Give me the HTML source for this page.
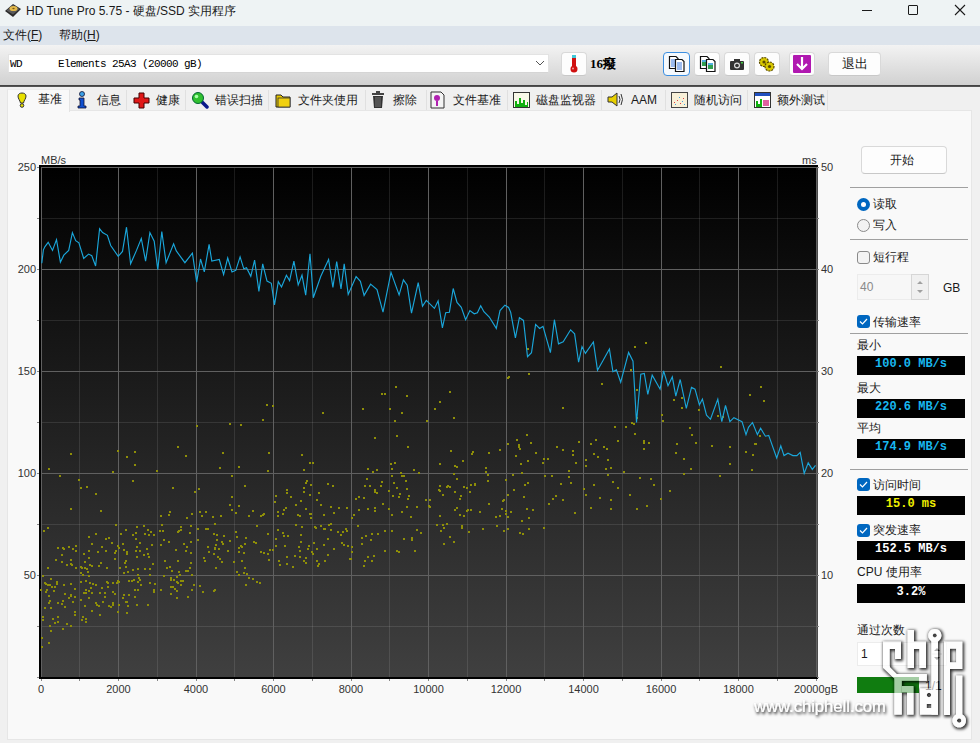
<!DOCTYPE html>
<html><head><meta charset="utf-8">
<style>
*{box-sizing:border-box}
html,body{margin:0;padding:0}
body{width:980px;height:743px;overflow:hidden;position:relative;background:#f0f0f0;font-family:"Liberation Sans",sans-serif;color:#1a1a1a}
.a{position:absolute}
.t{position:absolute;white-space:pre;font-size:12px;line-height:14px}
.btn{position:absolute;background:#fdfdfd;border:1px solid #d9d9d9;border-bottom-color:#c8c8c8;border-radius:4px}
.lcd{position:absolute;left:857px;width:108px;height:19px;background:#000;font-family:"Liberation Mono",monospace;font-weight:bold;font-size:12px;line-height:17px;text-align:center;white-space:pre}
.sep{position:absolute;left:850px;width:118px;height:1px;background:#a0a0a0}
.cb{position:absolute;left:857px;width:13px;height:13px;border-radius:3px;background:#0067c0}
.tab{position:absolute;top:90px;height:20px;background:#f0f0f0;border-right:1px solid #e0e0e0}
</style></head><body>
<!-- title bar -->
<div class="a" style="left:0;top:0;width:980px;height:26px;background:#eef3f4"></div>
<svg class="a" style="left:4px;top:2px" width="18" height="17" viewBox="0 0 18 17">
<path d="M1 9 L9 2 L17 7 L9 15 Z" fill="#2a2a2a"/>
<path d="M2.5 8.5 L9 3 L15.5 7 L9 12.5 Z" fill="#5a5a5a"/>
<ellipse cx="9.5" cy="6.5" rx="4" ry="2.6" fill="#e3b94a"/>
<ellipse cx="9.5" cy="6.5" rx="1.2" ry="0.8" fill="#7a5a10"/>
</svg>
<div class="t" style="left:26px;top:4px;font-size:12px;color:#1a1a1a">HD Tune Pro 5.75 - 硬盘/SSD 实用程序</div>
<div class="a" style="left:862px;top:10px;width:10px;height:1px;background:#1a1a1a"></div>
<div class="a" style="left:908px;top:5px;width:10px;height:10px;border:1px solid #1a1a1a;border-radius:1px"></div>
<svg class="a" style="left:954px;top:4px" width="12" height="12" viewBox="0 0 12 12"><path d="M1 1 L11 11 M11 1 L1 11" stroke="#1a1a1a" stroke-width="1.1"/></svg>
<!-- menu -->
<div class="a" style="left:0;top:26px;width:980px;height:19px;background:#dde4ec"></div>
<div class="t" style="left:3px;top:28px">文件(<u>F</u>)</div>
<div class="t" style="left:59px;top:28px">帮助(<u>H</u>)</div>
<!-- toolbar -->
<div class="a" style="left:0;top:45px;width:980px;height:40px;background:linear-gradient(#f3f3f3,#d1d1d1)"></div>
<div class="a" style="left:0;top:85px;width:980px;height:2px;background:linear-gradient(#3c3c3c,#5a5a5a)"></div>
<div class="a" style="left:8px;top:54px;width:541px;height:19px;background:#fff;border:1px solid #e3e3e3;border-bottom-color:#d5d5d5"></div>
<div class="t" style="left:10px;top:58px;font-family:'Liberation Mono',monospace;font-size:11px;letter-spacing:-0.6px;line-height:13px;color:#000">WD      Elements 25A3 (20000 gB)</div>
<svg class="a" style="left:535px;top:60px" width="10" height="7"><path d="M1 1 L5 5 L9 1" fill="none" stroke="#555" stroke-width="1"/></svg>
<!-- thermometer -->
<div class="btn" style="left:561px;top:52px;width:26px;height:24px"></div>
<svg class="a" style="left:566px;top:54px" width="16" height="20" viewBox="0 0 16 20">
<rect x="6" y="1" width="4" height="13" rx="2" fill="#d01010"/>
<rect x="6" y="1" width="4" height="3" fill="#40c8d8"/>
<circle cx="8" cy="15" r="3.5" fill="#d01010"/>
<circle cx="7" cy="14.5" r="1" fill="#fff" fill-opacity=".6"/>
</svg>
<div class="t" style="left:590px;top:57px;font-family:'Liberation Serif',serif;font-weight:bold;font-size:13px;color:#000">16癈</div>
<!-- toolbar buttons -->
<div class="btn" style="left:663px;top:52px;width:27px;height:24px;border:1px solid #3b8ee0;background:#f5f9fd"></div>
<div class="btn" style="left:694px;top:52px;width:26px;height:24px"></div>
<div class="btn" style="left:724px;top:52px;width:26px;height:24px"></div>
<div class="btn" style="left:754px;top:52px;width:26px;height:24px"></div>
<div class="btn" style="left:789px;top:52px;width:26px;height:24px"></div>
<div class="btn" style="left:828px;top:52px;width:53px;height:24px"></div>
<svg class="a" style="left:667px;top:55px" width="20" height="18" viewBox="0 0 20 18">
<path d="M2.5 1.5 H9 L11 3.5 V13.5 H2.5Z" fill="#fff" stroke="#111" stroke-width="1.2"/>
<path d="M4 5h5M4 7h5M4 9h5M4 11h5" stroke="#3a78e0" stroke-width="1"/>
<path d="M8.5 4.5 H15 L17 6.5 V16.5 H8.5Z" fill="#fff" stroke="#111" stroke-width="1.2"/>
<path d="M10 8h5M10 10h5M10 12h5M10 14h5" stroke="#3a78e0" stroke-width="1"/>
</svg>
<svg class="a" style="left:698px;top:55px" width="20" height="18" viewBox="0 0 20 18">
<path d="M2.5 1.5 H9 L11 3.5 V13.5 H2.5Z" fill="#fff" stroke="#111" stroke-width="1.2"/>
<rect x="4" y="5" width="5" height="6" fill="#30a050"/><rect x="4" y="5" width="5" height="2" fill="#50b0e0"/>
<path d="M8.5 4.5 H15 L17 6.5 V16.5 H8.5Z" fill="#fff" stroke="#111" stroke-width="1.2"/>
<rect x="10" y="8" width="5" height="6" fill="#30a050"/><rect x="10" y="8" width="5" height="2" fill="#50b0e0"/>
</svg>
<svg class="a" style="left:728px;top:56px" width="18" height="16" viewBox="0 0 18 16">
<rect x="2" y="5" width="14" height="9" rx="1" fill="#333"/>
<rect x="6" y="3" width="6" height="3" fill="#333"/>
<circle cx="9" cy="9.5" r="3" fill="#ddd"/>
<circle cx="9" cy="9.5" r="1.8" fill="#333"/>
<rect x="13" y="6" width="2" height="1.5" fill="#4c4"/>
</svg>
<svg class="a" style="left:757px;top:55px" width="20" height="18" viewBox="0 0 20 18">
<circle cx="7" cy="7" r="4.5" fill="#d8c800" stroke="#5a4a00" stroke-width="1.2" stroke-dasharray="2 1"/>
<circle cx="12.5" cy="11.5" r="4.5" fill="#d8c800" stroke="#5a4a00" stroke-width="1.2" stroke-dasharray="2 1"/>
<circle cx="7" cy="7" r="1.6" fill="#5a4a00"/><circle cx="12.5" cy="11.5" r="1.6" fill="#5a4a00"/>
</svg>
<svg class="a" style="left:792px;top:54px" width="20" height="20" viewBox="0 0 20 20">
<rect x="1" y="1" width="18" height="18" rx="1" fill="#b018b0"/>
<path d="M10 3 V15 M5 10 L10 15 L15 10" fill="none" stroke="#fff" stroke-width="2.2"/>
</svg>
<div class="t" style="left:842px;top:57px;font-size:13px">退出</div>
<!-- tab panel -->
<div class="a" style="left:7px;top:110px;width:965px;height:630px;background:#f9f9f9;border:1px solid #e6e6e6"></div>
<div class="tab" style="left:70px;width:57px"></div>
<div class="tab" style="left:127px;width:59px"></div>
<div class="tab" style="left:186px;width:83px"></div>
<div class="tab" style="left:269px;width:97px"></div>
<div class="tab" style="left:366px;width:61px"></div>
<div class="tab" style="left:427px;width:81px"></div>
<div class="tab" style="left:508px;width:94px"></div>
<div class="tab" style="left:602px;width:64px"></div>
<div class="tab" style="left:666px;width:82px"></div>
<div class="tab" style="left:748px;width:80px"></div>
<div class="a" style="left:7px;top:89px;width:63px;height:23px;background:#f9f9f9;border-left:1px solid #e6e6e6;border-top:1px solid #ececec;border-right:1px solid #e3e3e3"></div>
<!-- tab icons + labels -->
<svg class="a" style="left:15px;top:91px" width="14" height="17" viewBox="0 0 14 17"><path d="M3 5 C3 1 11 1 11 5 C11 8 9 9 8.5 12 L5.5 12 C5 9 3 8 3 5Z" fill="#e8e000" stroke="#333" stroke-width="1"/><circle cx="7" cy="14.5" r="1.8" fill="#e8e000" stroke="#333" stroke-width="1"/></svg>
<div class="t" style="left:38px;top:92px">基准</div>
<svg class="a" style="left:76px;top:91px" width="12" height="18" viewBox="0 0 12 18"><circle cx="6" cy="3" r="2.5" fill="#3aa0e8" stroke="#113" stroke-width=".8"/><path d="M3 7 H8 V15 H10 V17 H2 V15 H4 V9 H3Z" fill="#1050d0" stroke="#113" stroke-width=".8"/></svg>
<div class="t" style="left:97px;top:93px">信息</div>
<svg class="a" style="left:133px;top:92px" width="17" height="17" viewBox="0 0 17 17"><path d="M6 1 H11 V6 H16 V11 H11 V16 H6 V11 H1 V6 H6Z" fill="#e01818" stroke="#400" stroke-width="1"/></svg>
<div class="t" style="left:156px;top:93px">健康</div>
<svg class="a" style="left:191px;top:91px" width="18" height="18" viewBox="0 0 18 18"><path d="M10 10 L16 16" stroke="#0a1a8a" stroke-width="3.5" stroke-linecap="round"/><circle cx="7" cy="7" r="5.5" fill="#30c030" stroke="#063" stroke-width="1"/><circle cx="5.5" cy="5.5" r="1.8" fill="#afa"/></svg>
<div class="t" style="left:215px;top:93px">错误扫描</div>
<svg class="a" style="left:275px;top:92px" width="17" height="16" viewBox="0 0 17 16"><path d="M1 3 H6 L8 5 H15 V15 H1Z" fill="#e8c800" stroke="#222" stroke-width="1"/><rect x="3" y="6" width="12" height="9" fill="#f0d010" stroke="#333" stroke-width=".8"/></svg>
<div class="t" style="left:298px;top:93px">文件夹使用</div>
<svg class="a" style="left:371px;top:91px" width="14" height="18" viewBox="0 0 14 18"><rect x="1" y="2" width="12" height="2" fill="#444"/><rect x="5" y="0" width="4" height="2" fill="#444"/><path d="M2 5 H12 L11 17 H3Z" fill="#333"/><path d="M5 6 V16 M7 6 V16 M9 6 V16" stroke="#888" stroke-width=".8"/></svg>
<div class="t" style="left:393px;top:93px">擦除</div>
<svg class="a" style="left:430px;top:91px" width="15" height="18" viewBox="0 0 15 18"><path d="M1 1 H11 L14 4 V17 H1Z" fill="#f4f4f4" stroke="#333" stroke-width="1"/><circle cx="7" cy="7" r="3" fill="#b020b0"/><rect x="6" y="10" width="2" height="5" fill="#b020b0"/></svg>
<div class="t" style="left:453px;top:93px">文件基准</div>
<svg class="a" style="left:513px;top:92px" width="17" height="16" viewBox="0 0 17 16"><rect x=".5" y=".5" width="16" height="15" fill="#f8f8e8" stroke="#333"/><path d="M2 15 V9 H4 V12 H6 V6 H8 V11 H10 V8 H12 V13 H14 V10 H15 V15Z" fill="#10b010"/></svg>
<div class="t" style="left:536px;top:93px">磁盘监视器</div>
<svg class="a" style="left:607px;top:91px" width="18" height="17" viewBox="0 0 18 17"><path d="M1 6 H5 L10 2 V15 L5 11 H1Z" fill="#e8d000" stroke="#333" stroke-width="1"/><path d="M12 5 Q14 8.5 12 12 M14 3 Q17 8.5 14 14" fill="none" stroke="#333" stroke-width="1"/></svg>
<div class="t" style="left:631px;top:93px">AAM</div>
<svg class="a" style="left:671px;top:92px" width="17" height="16" viewBox="0 0 17 16"><rect x=".5" y=".5" width="16" height="15" fill="#f8f0d8" stroke="#444"/><g fill="#e04040"><rect x="3" y="10" width="1" height="1"/><rect x="6" y="8" width="1" height="1"/><rect x="9" y="11" width="1" height="1"/><rect x="12" y="6" width="1" height="1"/></g><g fill="#40a0e0"><rect x="4" y="12" width="1" height="1"/><rect x="8" y="5" width="1" height="1"/><rect x="11" y="9" width="1" height="1"/><rect x="13" y="12" width="1" height="1"/></g></svg>
<div class="t" style="left:694px;top:93px">随机访问</div>
<svg class="a" style="left:754px;top:92px" width="17" height="16" viewBox="0 0 17 16"><rect x=".5" y=".5" width="16" height="15" fill="#fff" stroke="#333"/><rect x="1" y="1" width="15" height="3" fill="#2050c0"/><path d="M2 15 V9 H4 V12 H6 V7 H8 V15Z" fill="#10b010"/><rect x="9" y="8" width="6" height="6" fill="#e060a0"/></svg>
<div class="t" style="left:777px;top:93px">额外测试</div>
<svg width="980" height="743" style="position:absolute;left:0;top:0">
<defs><linearGradient id="bg" x1="0" y1="0" x2="0" y2="1"><stop offset="0" stop-color="#000"/><stop offset="1" stop-color="#404040"/></linearGradient></defs>
<rect x="39" y="165" width="779" height="514" fill="url(#bg)"/>
<rect x="79" y="167" width="1" height="510" fill="#fff" fill-opacity="0.1"/>
<rect x="157" y="167" width="1" height="510" fill="#fff" fill-opacity="0.1"/>
<rect x="234" y="167" width="1" height="510" fill="#fff" fill-opacity="0.1"/>
<rect x="312" y="167" width="1" height="510" fill="#fff" fill-opacity="0.1"/>
<rect x="389" y="167" width="1" height="510" fill="#fff" fill-opacity="0.1"/>
<rect x="467" y="167" width="1" height="510" fill="#fff" fill-opacity="0.1"/>
<rect x="544" y="167" width="1" height="510" fill="#fff" fill-opacity="0.1"/>
<rect x="622" y="167" width="1" height="510" fill="#fff" fill-opacity="0.1"/>
<rect x="699" y="167" width="1" height="510" fill="#fff" fill-opacity="0.1"/>
<rect x="777" y="167" width="1" height="510" fill="#fff" fill-opacity="0.1"/>
<rect x="41" y="626" width="775" height="1" fill="#fff" fill-opacity="0.1"/>
<rect x="41" y="524" width="775" height="1" fill="#fff" fill-opacity="0.1"/>
<rect x="41" y="422" width="775" height="1" fill="#fff" fill-opacity="0.1"/>
<rect x="41" y="320" width="775" height="1" fill="#fff" fill-opacity="0.1"/>
<rect x="41" y="218" width="775" height="1" fill="#fff" fill-opacity="0.1"/>
<rect x="41" y="167" width="1" height="510" fill="#606060"/>
<rect x="118" y="167" width="1" height="510" fill="#606060"/>
<rect x="196" y="167" width="1" height="510" fill="#606060"/>
<rect x="273" y="167" width="1" height="510" fill="#606060"/>
<rect x="351" y="167" width="1" height="510" fill="#606060"/>
<rect x="428" y="167" width="1" height="510" fill="#606060"/>
<rect x="506" y="167" width="1" height="510" fill="#606060"/>
<rect x="583" y="167" width="1" height="510" fill="#606060"/>
<rect x="661" y="167" width="1" height="510" fill="#606060"/>
<rect x="738" y="167" width="1" height="510" fill="#606060"/>
<rect x="816" y="167" width="1" height="510" fill="#606060"/>
<rect x="41" y="677" width="775" height="1" fill="#606060"/>
<rect x="41" y="575" width="775" height="1" fill="#606060"/>
<rect x="41" y="473" width="775" height="1" fill="#606060"/>
<rect x="41" y="371" width="775" height="1" fill="#606060"/>
<rect x="41" y="269" width="775" height="1" fill="#606060"/>
<rect x="41" y="167" width="775" height="1" fill="#606060"/>
<rect x="39" y="165" width="779" height="2" fill="#000"/>
<rect x="39" y="165" width="2" height="514" fill="#000"/>
<rect x="39" y="677" width="779" height="2" fill="#000"/>
<rect x="817" y="167" width="1" height="510" fill="#4a4a4a"/>
<g fill="#8e8e08"><rect x="43" y="530" width="2" height="2"/><rect x="47" y="527" width="2" height="2"/><rect x="57" y="547" width="2" height="2"/><rect x="61" y="554" width="2" height="2"/><rect x="62" y="547" width="2" height="2"/><rect x="63" y="548" width="2" height="2"/><rect x="68" y="546" width="2" height="2"/><rect x="72" y="548" width="2" height="2"/><rect x="75" y="550" width="2" height="2"/><rect x="75" y="545" width="2" height="2"/><rect x="55" y="559" width="2" height="2"/><rect x="61" y="561" width="2" height="2"/><rect x="66" y="564" width="2" height="2"/><rect x="70" y="559" width="2" height="2"/><rect x="70" y="563" width="2" height="2"/><rect x="71" y="564" width="2" height="2"/><rect x="75" y="567" width="2" height="2"/><rect x="47" y="567" width="2" height="2"/><rect x="95" y="533" width="2" height="2"/><rect x="88" y="536" width="2" height="2"/><rect x="105" y="538" width="2" height="2"/><rect x="108" y="537" width="2" height="2"/><rect x="111" y="542" width="2" height="2"/><rect x="91" y="543" width="2" height="2"/><rect x="101" y="546" width="2" height="2"/><rect x="88" y="550" width="2" height="2"/><rect x="97" y="551" width="2" height="2"/><rect x="105" y="550" width="2" height="2"/><rect x="114" y="552" width="2" height="2"/><rect x="115" y="550" width="2" height="2"/><rect x="117" y="545" width="2" height="2"/><rect x="83" y="553" width="2" height="2"/><rect x="88" y="557" width="2" height="2"/><rect x="114" y="558" width="2" height="2"/><rect x="84" y="561" width="2" height="2"/><rect x="89" y="564" width="2" height="2"/><rect x="91" y="565" width="2" height="2"/><rect x="98" y="565" width="2" height="2"/><rect x="100" y="562" width="2" height="2"/><rect x="106" y="567" width="2" height="2"/><rect x="80" y="566" width="2" height="2"/><rect x="81" y="567" width="2" height="2"/><rect x="84" y="567" width="2" height="2"/><rect x="86" y="568" width="2" height="2"/><rect x="87" y="571" width="2" height="2"/><rect x="80" y="572" width="2" height="2"/><rect x="82" y="574" width="2" height="2"/><rect x="88" y="575" width="2" height="2"/><rect x="115" y="524" width="2" height="2"/><rect x="136" y="526" width="2" height="2"/><rect x="143" y="525" width="2" height="2"/><rect x="125" y="529" width="2" height="2"/><rect x="135" y="532" width="2" height="2"/><rect x="132" y="534" width="2" height="2"/><rect x="147" y="529" width="2" height="2"/><rect x="150" y="531" width="2" height="2"/><rect x="153" y="534" width="2" height="2"/><rect x="144" y="533" width="2" height="2"/><rect x="148" y="534" width="2" height="2"/><rect x="120" y="533" width="2" height="2"/><rect x="135" y="538" width="2" height="2"/><rect x="139" y="542" width="2" height="2"/><rect x="122" y="543" width="2" height="2"/><rect x="151" y="544" width="2" height="2"/><rect x="136" y="546" width="2" height="2"/><rect x="118" y="547" width="2" height="2"/><rect x="123" y="549" width="2" height="2"/><rect x="126" y="551" width="2" height="2"/><rect x="135" y="550" width="2" height="2"/><rect x="139" y="550" width="2" height="2"/><rect x="146" y="548" width="2" height="2"/><rect x="147" y="553" width="2" height="2"/><rect x="126" y="553" width="2" height="2"/><rect x="143" y="554" width="2" height="2"/><rect x="136" y="556" width="2" height="2"/><rect x="148" y="556" width="2" height="2"/><rect x="125" y="560" width="2" height="2"/><rect x="124" y="562" width="2" height="2"/><rect x="125" y="566" width="2" height="2"/><rect x="152" y="563" width="2" height="2"/><rect x="119" y="567" width="2" height="2"/><rect x="127" y="571" width="2" height="2"/><rect x="123" y="572" width="2" height="2"/><rect x="132" y="569" width="2" height="2"/><rect x="137" y="568" width="2" height="2"/><rect x="144" y="568" width="2" height="2"/><rect x="149" y="568" width="2" height="2"/><rect x="149" y="574" width="2" height="2"/><rect x="137" y="574" width="2" height="2"/><rect x="161" y="524" width="2" height="2"/><rect x="180" y="526" width="2" height="2"/><rect x="190" y="525" width="2" height="2"/><rect x="177" y="531" width="2" height="2"/><rect x="178" y="530" width="2" height="2"/><rect x="180" y="529" width="2" height="2"/><rect x="159" y="530" width="2" height="2"/><rect x="162" y="530" width="2" height="2"/><rect x="189" y="532" width="2" height="2"/><rect x="163" y="539" width="2" height="2"/><rect x="168" y="541" width="2" height="2"/><rect x="183" y="543" width="2" height="2"/><rect x="160" y="544" width="2" height="2"/><rect x="186" y="546" width="2" height="2"/><rect x="190" y="541" width="2" height="2"/><rect x="175" y="549" width="2" height="2"/><rect x="185" y="550" width="2" height="2"/><rect x="190" y="552" width="2" height="2"/><rect x="164" y="560" width="2" height="2"/><rect x="177" y="560" width="2" height="2"/><rect x="190" y="562" width="2" height="2"/><rect x="166" y="567" width="2" height="2"/><rect x="169" y="566" width="2" height="2"/><rect x="171" y="570" width="2" height="2"/><rect x="178" y="571" width="2" height="2"/><rect x="185" y="570" width="2" height="2"/><rect x="187" y="570" width="2" height="2"/><rect x="189" y="567" width="2" height="2"/><rect x="163" y="575" width="2" height="2"/><rect x="179" y="574" width="2" height="2"/><rect x="191" y="574" width="2" height="2"/><rect x="42" y="575" width="2" height="2"/><rect x="50" y="578" width="2" height="2"/><rect x="44" y="582" width="2" height="2"/><rect x="45" y="583" width="2" height="2"/><rect x="47" y="584" width="2" height="2"/><rect x="49" y="584" width="2" height="2"/><rect x="56" y="581" width="2" height="2"/><rect x="56" y="583" width="2" height="2"/><rect x="51" y="586" width="2" height="2"/><rect x="54" y="586" width="2" height="2"/><rect x="63" y="584" width="2" height="2"/><rect x="70" y="583" width="2" height="2"/><rect x="74" y="588" width="2" height="2"/><rect x="46" y="589" width="2" height="2"/><rect x="53" y="590" width="2" height="2"/><rect x="45" y="591" width="2" height="2"/><rect x="64" y="593" width="2" height="2"/><rect x="70" y="594" width="2" height="2"/><rect x="70" y="595" width="2" height="2"/><rect x="74" y="596" width="2" height="2"/><rect x="48" y="595" width="2" height="2"/><rect x="68" y="597" width="2" height="2"/><rect x="49" y="600" width="2" height="2"/><rect x="48" y="602" width="2" height="2"/><rect x="57" y="602" width="2" height="2"/><rect x="61" y="603" width="2" height="2"/><rect x="62" y="600" width="2" height="2"/><rect x="72" y="601" width="2" height="2"/><rect x="44" y="607" width="2" height="2"/><rect x="50" y="607" width="2" height="2"/><rect x="64" y="606" width="2" height="2"/><rect x="74" y="611" width="2" height="2"/><rect x="74" y="614" width="2" height="2"/><rect x="42" y="616" width="2" height="2"/><rect x="42" y="619" width="2" height="2"/><rect x="52" y="618" width="2" height="2"/><rect x="57" y="616" width="2" height="2"/><rect x="57" y="621" width="2" height="2"/><rect x="54" y="622" width="2" height="2"/><rect x="66" y="623" width="2" height="2"/><rect x="70" y="625" width="2" height="2"/><rect x="49" y="625" width="2" height="2"/><rect x="50" y="630" width="2" height="2"/><rect x="62" y="628" width="2" height="2"/><rect x="40" y="589" width="2" height="2"/><rect x="80" y="581" width="2" height="2"/><rect x="85" y="580" width="2" height="2"/><rect x="89" y="582" width="2" height="2"/><rect x="92" y="583" width="2" height="2"/><rect x="95" y="584" width="2" height="2"/><rect x="106" y="581" width="2" height="2"/><rect x="107" y="582" width="2" height="2"/><rect x="112" y="582" width="2" height="2"/><rect x="116" y="582" width="2" height="2"/><rect x="101" y="587" width="2" height="2"/><rect x="107" y="586" width="2" height="2"/><rect x="90" y="587" width="2" height="2"/><rect x="85" y="589" width="2" height="2"/><rect x="88" y="590" width="2" height="2"/><rect x="83" y="592" width="2" height="2"/><rect x="85" y="592" width="2" height="2"/><rect x="91" y="592" width="2" height="2"/><rect x="99" y="592" width="2" height="2"/><rect x="104" y="592" width="2" height="2"/><rect x="112" y="591" width="2" height="2"/><rect x="114" y="593" width="2" height="2"/><rect x="88" y="597" width="2" height="2"/><rect x="104" y="596" width="2" height="2"/><rect x="80" y="599" width="2" height="2"/><rect x="95" y="602" width="2" height="2"/><rect x="96" y="604" width="2" height="2"/><rect x="98" y="605" width="2" height="2"/><rect x="102" y="601" width="2" height="2"/><rect x="112" y="602" width="2" height="2"/><rect x="112" y="604" width="2" height="2"/><rect x="108" y="605" width="2" height="2"/><rect x="110" y="606" width="2" height="2"/><rect x="84" y="605" width="2" height="2"/><rect x="91" y="610" width="2" height="2"/><rect x="99" y="614" width="2" height="2"/><rect x="117" y="611" width="2" height="2"/><rect x="82" y="616" width="2" height="2"/><rect x="81" y="619" width="2" height="2"/><rect x="85" y="618" width="2" height="2"/><rect x="85" y="621" width="2" height="2"/><rect x="118" y="581" width="2" height="2"/><rect x="128" y="580" width="2" height="2"/><rect x="131" y="580" width="2" height="2"/><rect x="133" y="579" width="2" height="2"/><rect x="137" y="581" width="2" height="2"/><rect x="138" y="577" width="2" height="2"/><rect x="139" y="579" width="2" height="2"/><rect x="140" y="584" width="2" height="2"/><rect x="149" y="582" width="2" height="2"/><rect x="154" y="583" width="2" height="2"/><rect x="134" y="589" width="2" height="2"/><rect x="137" y="589" width="2" height="2"/><rect x="153" y="589" width="2" height="2"/><rect x="153" y="591" width="2" height="2"/><rect x="123" y="594" width="2" height="2"/><rect x="128" y="594" width="2" height="2"/><rect x="134" y="596" width="2" height="2"/><rect x="122" y="597" width="2" height="2"/><rect x="125" y="601" width="2" height="2"/><rect x="126" y="601" width="2" height="2"/><rect x="127" y="605" width="2" height="2"/><rect x="136" y="604" width="2" height="2"/><rect x="147" y="604" width="2" height="2"/><rect x="118" y="604" width="2" height="2"/><rect x="126" y="612" width="2" height="2"/><rect x="117" y="580" width="2" height="2"/><rect x="170" y="577" width="2" height="2"/><rect x="170" y="579" width="2" height="2"/><rect x="173" y="579" width="2" height="2"/><rect x="176" y="576" width="2" height="2"/><rect x="176" y="581" width="2" height="2"/><rect x="177" y="582" width="2" height="2"/><rect x="180" y="580" width="2" height="2"/><rect x="182" y="580" width="2" height="2"/><rect x="180" y="584" width="2" height="2"/><rect x="193" y="584" width="2" height="2"/><rect x="160" y="589" width="2" height="2"/><rect x="170" y="586" width="2" height="2"/><rect x="172" y="586" width="2" height="2"/><rect x="174" y="588" width="2" height="2"/><rect x="176" y="590" width="2" height="2"/><rect x="191" y="589" width="2" height="2"/><rect x="170" y="593" width="2" height="2"/><rect x="176" y="597" width="2" height="2"/><rect x="187" y="596" width="2" height="2"/><rect x="41" y="637" width="2" height="2"/><rect x="48" y="642" width="2" height="2"/><rect x="41" y="646" width="2" height="2"/><rect x="48" y="468" width="2" height="2"/><rect x="70" y="453" width="2" height="2"/><rect x="59" y="475" width="2" height="2"/><rect x="70" y="508" width="2" height="2"/><rect x="78" y="479" width="2" height="2"/><rect x="80" y="487" width="2" height="2"/><rect x="86" y="486" width="2" height="2"/><rect x="95" y="493" width="2" height="2"/><rect x="100" y="510" width="2" height="2"/><rect x="112" y="471" width="2" height="2"/><rect x="117" y="450" width="2" height="2"/><rect x="126" y="456" width="2" height="2"/><rect x="134" y="451" width="2" height="2"/><rect x="134" y="464" width="2" height="2"/><rect x="132" y="480" width="2" height="2"/><rect x="156" y="470" width="2" height="2"/><rect x="160" y="515" width="2" height="2"/><rect x="168" y="514" width="2" height="2"/><rect x="169" y="511" width="2" height="2"/><rect x="172" y="487" width="2" height="2"/><rect x="177" y="446" width="2" height="2"/><rect x="185" y="455" width="2" height="2"/><rect x="186" y="517" width="2" height="2"/><rect x="191" y="513" width="2" height="2"/><rect x="194" y="491" width="2" height="2"/><rect x="197" y="528" width="2" height="2"/><rect x="205" y="528" width="2" height="2"/><rect x="207" y="528" width="2" height="2"/><rect x="214" y="523" width="2" height="2"/><rect x="213" y="533" width="2" height="2"/><rect x="216" y="534" width="2" height="2"/><rect x="223" y="535" width="2" height="2"/><rect x="197" y="539" width="2" height="2"/><rect x="216" y="539" width="2" height="2"/><rect x="221" y="541" width="2" height="2"/><rect x="222" y="543" width="2" height="2"/><rect x="229" y="540" width="2" height="2"/><rect x="215" y="544" width="2" height="2"/><rect x="207" y="546" width="2" height="2"/><rect x="214" y="547" width="2" height="2"/><rect x="214" y="548" width="2" height="2"/><rect x="218" y="548" width="2" height="2"/><rect x="227" y="550" width="2" height="2"/><rect x="208" y="551" width="2" height="2"/><rect x="213" y="553" width="2" height="2"/><rect x="217" y="556" width="2" height="2"/><rect x="219" y="558" width="2" height="2"/><rect x="203" y="557" width="2" height="2"/><rect x="204" y="560" width="2" height="2"/><rect x="221" y="561" width="2" height="2"/><rect x="215" y="567" width="2" height="2"/><rect x="235" y="531" width="2" height="2"/><rect x="236" y="536" width="2" height="2"/><rect x="245" y="537" width="2" height="2"/><rect x="244" y="543" width="2" height="2"/><rect x="238" y="547" width="2" height="2"/><rect x="240" y="545" width="2" height="2"/><rect x="241" y="546" width="2" height="2"/><rect x="238" y="551" width="2" height="2"/><rect x="243" y="552" width="2" height="2"/><rect x="253" y="541" width="2" height="2"/><rect x="255" y="542" width="2" height="2"/><rect x="267" y="533" width="2" height="2"/><rect x="260" y="551" width="2" height="2"/><rect x="263" y="552" width="2" height="2"/><rect x="267" y="553" width="2" height="2"/><rect x="269" y="549" width="2" height="2"/><rect x="272" y="549" width="2" height="2"/><rect x="268" y="559" width="2" height="2"/><rect x="233" y="561" width="2" height="2"/><rect x="241" y="560" width="2" height="2"/><rect x="244" y="567" width="2" height="2"/><rect x="236" y="571" width="2" height="2"/><rect x="238" y="574" width="2" height="2"/><rect x="243" y="572" width="2" height="2"/><rect x="246" y="573" width="2" height="2"/><rect x="248" y="577" width="2" height="2"/><rect x="252" y="578" width="2" height="2"/><rect x="256" y="581" width="2" height="2"/><rect x="259" y="582" width="2" height="2"/><rect x="245" y="584" width="2" height="2"/><rect x="199" y="585" width="2" height="2"/><rect x="202" y="591" width="2" height="2"/><rect x="213" y="590" width="2" height="2"/><rect x="214" y="589" width="2" height="2"/><rect x="256" y="525" width="2" height="2"/><rect x="277" y="529" width="2" height="2"/><rect x="282" y="532" width="2" height="2"/><rect x="283" y="535" width="2" height="2"/><rect x="287" y="535" width="2" height="2"/><rect x="300" y="534" width="2" height="2"/><rect x="295" y="524" width="2" height="2"/><rect x="301" y="526" width="2" height="2"/><rect x="275" y="538" width="2" height="2"/><rect x="284" y="545" width="2" height="2"/><rect x="275" y="545" width="2" height="2"/><rect x="300" y="541" width="2" height="2"/><rect x="298" y="546" width="2" height="2"/><rect x="308" y="545" width="2" height="2"/><rect x="299" y="550" width="2" height="2"/><rect x="307" y="548" width="2" height="2"/><rect x="311" y="551" width="2" height="2"/><rect x="312" y="553" width="2" height="2"/><rect x="294" y="555" width="2" height="2"/><rect x="286" y="556" width="2" height="2"/><rect x="299" y="556" width="2" height="2"/><rect x="305" y="557" width="2" height="2"/><rect x="303" y="560" width="2" height="2"/><rect x="305" y="562" width="2" height="2"/><rect x="278" y="560" width="2" height="2"/><rect x="279" y="564" width="2" height="2"/><rect x="286" y="563" width="2" height="2"/><rect x="292" y="566" width="2" height="2"/><rect x="314" y="526" width="2" height="2"/><rect x="315" y="527" width="2" height="2"/><rect x="320" y="525" width="2" height="2"/><rect x="323" y="528" width="2" height="2"/><rect x="324" y="528" width="2" height="2"/><rect x="328" y="524" width="2" height="2"/><rect x="330" y="523" width="2" height="2"/><rect x="330" y="529" width="2" height="2"/><rect x="337" y="531" width="2" height="2"/><rect x="342" y="531" width="2" height="2"/><rect x="340" y="534" width="2" height="2"/><rect x="345" y="528" width="2" height="2"/><rect x="346" y="530" width="2" height="2"/><rect x="327" y="538" width="2" height="2"/><rect x="313" y="542" width="2" height="2"/><rect x="323" y="544" width="2" height="2"/><rect x="341" y="542" width="2" height="2"/><rect x="343" y="544" width="2" height="2"/><rect x="347" y="545" width="2" height="2"/><rect x="316" y="548" width="2" height="2"/><rect x="333" y="548" width="2" height="2"/><rect x="327" y="554" width="2" height="2"/><rect x="316" y="560" width="2" height="2"/><rect x="324" y="560" width="2" height="2"/><rect x="318" y="563" width="2" height="2"/><rect x="317" y="565" width="2" height="2"/><rect x="349" y="558" width="2" height="2"/><rect x="266" y="404" width="2" height="2"/><rect x="272" y="405" width="2" height="2"/><rect x="262" y="419" width="2" height="2"/><rect x="322" y="412" width="2" height="2"/><rect x="196" y="425" width="2" height="2"/><rect x="229" y="423" width="2" height="2"/><rect x="240" y="424" width="2" height="2"/><rect x="222" y="452" width="2" height="2"/><rect x="268" y="452" width="2" height="2"/><rect x="219" y="467" width="2" height="2"/><rect x="238" y="466" width="2" height="2"/><rect x="267" y="470" width="2" height="2"/><rect x="301" y="454" width="2" height="2"/><rect x="309" y="462" width="2" height="2"/><rect x="312" y="462" width="2" height="2"/><rect x="303" y="469" width="2" height="2"/><rect x="231" y="475" width="2" height="2"/><rect x="198" y="488" width="2" height="2"/><rect x="244" y="485" width="2" height="2"/><rect x="231" y="496" width="2" height="2"/><rect x="229" y="504" width="2" height="2"/><rect x="238" y="505" width="2" height="2"/><rect x="231" y="509" width="2" height="2"/><rect x="199" y="511" width="2" height="2"/><rect x="205" y="511" width="2" height="2"/><rect x="201" y="515" width="2" height="2"/><rect x="212" y="516" width="2" height="2"/><rect x="220" y="515" width="2" height="2"/><rect x="235" y="512" width="2" height="2"/><rect x="248" y="515" width="2" height="2"/><rect x="252" y="510" width="2" height="2"/><rect x="260" y="515" width="2" height="2"/><rect x="262" y="514" width="2" height="2"/><rect x="263" y="513" width="2" height="2"/><rect x="275" y="495" width="2" height="2"/><rect x="274" y="501" width="2" height="2"/><rect x="286" y="489" width="2" height="2"/><rect x="286" y="492" width="2" height="2"/><rect x="290" y="496" width="2" height="2"/><rect x="303" y="487" width="2" height="2"/><rect x="303" y="491" width="2" height="2"/><rect x="305" y="482" width="2" height="2"/><rect x="306" y="480" width="2" height="2"/><rect x="310" y="484" width="2" height="2"/><rect x="309" y="494" width="2" height="2"/><rect x="300" y="500" width="2" height="2"/><rect x="295" y="504" width="2" height="2"/><rect x="285" y="507" width="2" height="2"/><rect x="283" y="509" width="2" height="2"/><rect x="277" y="511" width="2" height="2"/><rect x="277" y="515" width="2" height="2"/><rect x="282" y="513" width="2" height="2"/><rect x="305" y="508" width="2" height="2"/><rect x="309" y="513" width="2" height="2"/><rect x="310" y="513" width="2" height="2"/><rect x="297" y="514" width="2" height="2"/><rect x="299" y="515" width="2" height="2"/><rect x="310" y="517" width="2" height="2"/><rect x="318" y="492" width="2" height="2"/><rect x="316" y="499" width="2" height="2"/><rect x="320" y="504" width="2" height="2"/><rect x="327" y="483" width="2" height="2"/><rect x="332" y="485" width="2" height="2"/><rect x="330" y="506" width="2" height="2"/><rect x="333" y="512" width="2" height="2"/><rect x="338" y="507" width="2" height="2"/><rect x="346" y="507" width="2" height="2"/><rect x="323" y="514" width="2" height="2"/><rect x="395" y="386" width="2" height="2"/><rect x="381" y="393" width="2" height="2"/><rect x="384" y="393" width="2" height="2"/><rect x="406" y="395" width="2" height="2"/><rect x="362" y="408" width="2" height="2"/><rect x="389" y="408" width="2" height="2"/><rect x="401" y="412" width="2" height="2"/><rect x="394" y="420" width="2" height="2"/><rect x="426" y="420" width="2" height="2"/><rect x="449" y="391" width="2" height="2"/><rect x="439" y="401" width="2" height="2"/><rect x="434" y="408" width="2" height="2"/><rect x="453" y="417" width="2" height="2"/><rect x="374" y="437" width="2" height="2"/><rect x="396" y="435" width="2" height="2"/><rect x="407" y="446" width="2" height="2"/><rect x="450" y="450" width="2" height="2"/><rect x="472" y="451" width="2" height="2"/><rect x="471" y="453" width="2" height="2"/><rect x="488" y="452" width="2" height="2"/><rect x="499" y="449" width="2" height="2"/><rect x="462" y="460" width="2" height="2"/><rect x="439" y="463" width="2" height="2"/><rect x="454" y="465" width="2" height="2"/><rect x="456" y="466" width="2" height="2"/><rect x="485" y="467" width="2" height="2"/><rect x="485" y="471" width="2" height="2"/><rect x="487" y="474" width="2" height="2"/><rect x="487" y="480" width="2" height="2"/><rect x="390" y="463" width="2" height="2"/><rect x="394" y="462" width="2" height="2"/><rect x="391" y="468" width="2" height="2"/><rect x="367" y="468" width="2" height="2"/><rect x="372" y="471" width="2" height="2"/><rect x="376" y="469" width="2" height="2"/><rect x="413" y="469" width="2" height="2"/><rect x="418" y="472" width="2" height="2"/><rect x="400" y="472" width="2" height="2"/><rect x="391" y="475" width="2" height="2"/><rect x="401" y="475" width="2" height="2"/><rect x="403" y="475" width="2" height="2"/><rect x="405" y="480" width="2" height="2"/><rect x="453" y="473" width="2" height="2"/><rect x="456" y="478" width="2" height="2"/><rect x="366" y="478" width="2" height="2"/><rect x="381" y="481" width="2" height="2"/><rect x="364" y="485" width="2" height="2"/><rect x="369" y="485" width="2" height="2"/><rect x="380" y="485" width="2" height="2"/><rect x="374" y="489" width="2" height="2"/><rect x="374" y="491" width="2" height="2"/><rect x="376" y="492" width="2" height="2"/><rect x="388" y="490" width="2" height="2"/><rect x="393" y="482" width="2" height="2"/><rect x="396" y="487" width="2" height="2"/><rect x="406" y="488" width="2" height="2"/><rect x="399" y="493" width="2" height="2"/><rect x="398" y="496" width="2" height="2"/><rect x="392" y="495" width="2" height="2"/><rect x="408" y="495" width="2" height="2"/><rect x="407" y="498" width="2" height="2"/><rect x="358" y="496" width="2" height="2"/><rect x="355" y="498" width="2" height="2"/><rect x="363" y="497" width="2" height="2"/><rect x="382" y="503" width="2" height="2"/><rect x="425" y="499" width="2" height="2"/><rect x="429" y="499" width="2" height="2"/><rect x="428" y="505" width="2" height="2"/><rect x="429" y="506" width="2" height="2"/><rect x="439" y="485" width="2" height="2"/><rect x="438" y="489" width="2" height="2"/><rect x="439" y="490" width="2" height="2"/><rect x="442" y="494" width="2" height="2"/><rect x="446" y="486" width="2" height="2"/><rect x="447" y="485" width="2" height="2"/><rect x="449" y="486" width="2" height="2"/><rect x="454" y="491" width="2" height="2"/><rect x="460" y="495" width="2" height="2"/><rect x="459" y="498" width="2" height="2"/><rect x="463" y="486" width="2" height="2"/><rect x="466" y="487" width="2" height="2"/><rect x="470" y="484" width="2" height="2"/><rect x="474" y="483" width="2" height="2"/><rect x="474" y="484" width="2" height="2"/><rect x="469" y="491" width="2" height="2"/><rect x="488" y="503" width="2" height="2"/><rect x="502" y="500" width="2" height="2"/><rect x="503" y="499" width="2" height="2"/><rect x="358" y="509" width="2" height="2"/><rect x="367" y="508" width="2" height="2"/><rect x="374" y="507" width="2" height="2"/><rect x="374" y="510" width="2" height="2"/><rect x="388" y="508" width="2" height="2"/><rect x="406" y="506" width="2" height="2"/><rect x="416" y="506" width="2" height="2"/><rect x="401" y="511" width="2" height="2"/><rect x="391" y="514" width="2" height="2"/><rect x="410" y="516" width="2" height="2"/><rect x="353" y="514" width="2" height="2"/><rect x="351" y="517" width="2" height="2"/><rect x="454" y="509" width="2" height="2"/><rect x="456" y="507" width="2" height="2"/><rect x="466" y="510" width="2" height="2"/><rect x="467" y="509" width="2" height="2"/><rect x="470" y="509" width="2" height="2"/><rect x="479" y="511" width="2" height="2"/><rect x="459" y="514" width="2" height="2"/><rect x="463" y="515" width="2" height="2"/><rect x="439" y="515" width="2" height="2"/><rect x="501" y="508" width="2" height="2"/><rect x="505" y="510" width="2" height="2"/><rect x="505" y="513" width="2" height="2"/><rect x="499" y="515" width="2" height="2"/><rect x="495" y="516" width="2" height="2"/><rect x="384" y="530" width="2" height="2"/><rect x="391" y="530" width="2" height="2"/><rect x="371" y="533" width="2" height="2"/><rect x="377" y="533" width="2" height="2"/><rect x="365" y="535" width="2" height="2"/><rect x="361" y="537" width="2" height="2"/><rect x="370" y="539" width="2" height="2"/><rect x="361" y="543" width="2" height="2"/><rect x="351" y="546" width="2" height="2"/><rect x="351" y="551" width="2" height="2"/><rect x="350" y="558" width="2" height="2"/><rect x="367" y="556" width="2" height="2"/><rect x="373" y="555" width="2" height="2"/><rect x="364" y="560" width="2" height="2"/><rect x="371" y="560" width="2" height="2"/><rect x="363" y="565" width="2" height="2"/><rect x="384" y="550" width="2" height="2"/><rect x="396" y="550" width="2" height="2"/><rect x="398" y="551" width="2" height="2"/><rect x="414" y="550" width="2" height="2"/><rect x="403" y="538" width="2" height="2"/><rect x="411" y="537" width="2" height="2"/><rect x="411" y="539" width="2" height="2"/><rect x="416" y="529" width="2" height="2"/><rect x="420" y="532" width="2" height="2"/><rect x="442" y="524" width="2" height="2"/><rect x="446" y="523" width="2" height="2"/><rect x="443" y="527" width="2" height="2"/><rect x="440" y="530" width="2" height="2"/><rect x="461" y="527" width="2" height="2"/><rect x="449" y="536" width="2" height="2"/><rect x="453" y="541" width="2" height="2"/><rect x="443" y="543" width="2" height="2"/><rect x="468" y="531" width="2" height="2"/><rect x="482" y="528" width="2" height="2"/><rect x="496" y="525" width="2" height="2"/><rect x="503" y="530" width="2" height="2"/><rect x="357" y="525" width="2" height="2"/><rect x="461" y="525" width="2" height="2"/><rect x="436" y="524" width="2" height="2"/><rect x="507" y="377" width="2" height="2"/><rect x="528" y="373" width="2" height="2"/><rect x="562" y="407" width="2" height="2"/><rect x="601" y="383" width="2" height="2"/><rect x="636" y="389" width="2" height="2"/><rect x="636" y="417" width="2" height="2"/><rect x="631" y="422" width="2" height="2"/><rect x="633" y="423" width="2" height="2"/><rect x="614" y="426" width="2" height="2"/><rect x="625" y="426" width="2" height="2"/><rect x="634" y="433" width="2" height="2"/><rect x="526" y="434" width="2" height="2"/><rect x="516" y="439" width="2" height="2"/><rect x="507" y="443" width="2" height="2"/><rect x="518" y="444" width="2" height="2"/><rect x="518" y="446" width="2" height="2"/><rect x="519" y="448" width="2" height="2"/><rect x="530" y="442" width="2" height="2"/><rect x="515" y="455" width="2" height="2"/><rect x="535" y="452" width="2" height="2"/><rect x="527" y="460" width="2" height="2"/><rect x="520" y="463" width="2" height="2"/><rect x="521" y="472" width="2" height="2"/><rect x="543" y="458" width="2" height="2"/><rect x="547" y="458" width="2" height="2"/><rect x="542" y="462" width="2" height="2"/><rect x="556" y="446" width="2" height="2"/><rect x="562" y="449" width="2" height="2"/><rect x="572" y="450" width="2" height="2"/><rect x="572" y="454" width="2" height="2"/><rect x="578" y="441" width="2" height="2"/><rect x="575" y="462" width="2" height="2"/><rect x="568" y="470" width="2" height="2"/><rect x="595" y="439" width="2" height="2"/><rect x="590" y="443" width="2" height="2"/><rect x="603" y="446" width="2" height="2"/><rect x="606" y="448" width="2" height="2"/><rect x="593" y="453" width="2" height="2"/><rect x="597" y="456" width="2" height="2"/><rect x="585" y="459" width="2" height="2"/><rect x="585" y="465" width="2" height="2"/><rect x="607" y="459" width="2" height="2"/><rect x="605" y="468" width="2" height="2"/><rect x="610" y="467" width="2" height="2"/><rect x="617" y="440" width="2" height="2"/><rect x="643" y="440" width="2" height="2"/><rect x="643" y="442" width="2" height="2"/><rect x="648" y="442" width="2" height="2"/><rect x="643" y="448" width="2" height="2"/><rect x="623" y="471" width="2" height="2"/><rect x="512" y="474" width="2" height="2"/><rect x="505" y="479" width="2" height="2"/><rect x="524" y="484" width="2" height="2"/><rect x="527" y="482" width="2" height="2"/><rect x="513" y="489" width="2" height="2"/><rect x="507" y="494" width="2" height="2"/><rect x="523" y="496" width="2" height="2"/><rect x="526" y="508" width="2" height="2"/><rect x="532" y="509" width="2" height="2"/><rect x="510" y="511" width="2" height="2"/><rect x="507" y="516" width="2" height="2"/><rect x="528" y="517" width="2" height="2"/><rect x="521" y="520" width="2" height="2"/><rect x="544" y="475" width="2" height="2"/><rect x="551" y="475" width="2" height="2"/><rect x="560" y="483" width="2" height="2"/><rect x="568" y="476" width="2" height="2"/><rect x="570" y="482" width="2" height="2"/><rect x="555" y="495" width="2" height="2"/><rect x="552" y="498" width="2" height="2"/><rect x="562" y="499" width="2" height="2"/><rect x="548" y="503" width="2" height="2"/><rect x="574" y="512" width="2" height="2"/><rect x="607" y="474" width="2" height="2"/><rect x="612" y="481" width="2" height="2"/><rect x="593" y="484" width="2" height="2"/><rect x="617" y="487" width="2" height="2"/><rect x="583" y="488" width="2" height="2"/><rect x="585" y="494" width="2" height="2"/><rect x="599" y="497" width="2" height="2"/><rect x="610" y="499" width="2" height="2"/><rect x="590" y="507" width="2" height="2"/><rect x="610" y="508" width="2" height="2"/><rect x="639" y="477" width="2" height="2"/><rect x="650" y="478" width="2" height="2"/><rect x="653" y="484" width="2" height="2"/><rect x="629" y="494" width="2" height="2"/><rect x="646" y="505" width="2" height="2"/><rect x="636" y="508" width="2" height="2"/><rect x="660" y="498" width="2" height="2"/><rect x="507" y="528" width="2" height="2"/><rect x="519" y="532" width="2" height="2"/><rect x="522" y="533" width="2" height="2"/><rect x="528" y="528" width="2" height="2"/><rect x="543" y="527" width="2" height="2"/><rect x="673" y="399" width="2" height="2"/><rect x="681" y="397" width="2" height="2"/><rect x="681" y="407" width="2" height="2"/><rect x="698" y="409" width="2" height="2"/><rect x="661" y="414" width="2" height="2"/><rect x="662" y="420" width="2" height="2"/><rect x="717" y="415" width="2" height="2"/><rect x="722" y="416" width="2" height="2"/><rect x="749" y="394" width="2" height="2"/><rect x="760" y="386" width="2" height="2"/><rect x="763" y="400" width="2" height="2"/><rect x="689" y="427" width="2" height="2"/><rect x="691" y="434" width="2" height="2"/><rect x="695" y="442" width="2" height="2"/><rect x="676" y="443" width="2" height="2"/><rect x="675" y="452" width="2" height="2"/><rect x="683" y="458" width="2" height="2"/><rect x="690" y="468" width="2" height="2"/><rect x="683" y="473" width="2" height="2"/><rect x="711" y="445" width="2" height="2"/><rect x="729" y="446" width="2" height="2"/><rect x="729" y="463" width="2" height="2"/><rect x="719" y="475" width="2" height="2"/><rect x="759" y="435" width="2" height="2"/><rect x="754" y="443" width="2" height="2"/><rect x="755" y="443" width="2" height="2"/><rect x="745" y="451" width="2" height="2"/><rect x="752" y="454" width="2" height="2"/><rect x="751" y="469" width="2" height="2"/><rect x="669" y="490" width="2" height="2"/><rect x="660" y="498" width="2" height="2"/><rect x="527" y="348" width="2" height="2"/><rect x="634" y="346" width="2" height="2"/><rect x="645" y="342" width="2" height="2"/><rect x="630" y="369" width="2" height="2"/><rect x="720" y="366" width="2" height="2"/><rect x="508" y="376" width="2" height="2"/></g>
<polyline fill="none" stroke="#1aa6da" stroke-width="1.15" stroke-linejoin="miter" points="41.8,263.3 43.4,249.8 45.0,246.6 48.2,242.3 52.5,250.4 56.5,239.6 60.4,262.2 63.8,255.2 68.7,250.4 72.4,232.6 75.7,240.7 78.9,242.8 83.7,258.4 88.6,254.1 91.8,255.7 95.6,266 99.6,228.8 102.6,232.6 107.4,235.3 110.7,245.5 118.2,256.3 122.5,251.4 126.5,227.2 130.6,263.8 136.5,250.4 141.3,238.5 145.6,261.1 149.9,232.6 154.2,241.2 157.8,269.7 161.8,231.5 166.1,262.7 173.6,243.9 176.3,250.9 184.9,262.7 192.4,253.1 196.7,282.1 200.5,259 204.3,271.9 209.1,244.4 211.8,261.1 219.3,259.5 223.6,274.6 227.7,258 232,272 235.8,270.4 240.1,256.9 243.8,268.8 246.5,267.7 250.8,276.3 254.6,260.1 258.9,291.4 262.7,263.9 267,281.1 271.3,283.3 274.5,304.8 278.3,281.7 281.5,287 286.4,275.2 289.6,280.6 293.9,261.2 298.2,284.9 302,275.2 305.7,295.1 310,253.7 313.3,297.8 320.8,276.3 328.6,259.4 332.9,287.4 336.7,261.5 341,289 344.2,263.7 348.2,294.4 356.1,276.6 360.4,281.4 364.1,295.4 370.6,284.1 377,289.5 383,312.1 391,272.3 399.1,294.9 403.4,279.8 407.2,285.2 411.5,313.2 418.2,282.6 422.5,306.3 426.3,300.4 434.4,308.4 438.1,300.9 442.4,327.8 445.7,312.7 449.4,312.2 453.2,288.5 457,302.5 461.3,307.4 465.6,319.7 469.9,310.6 474.2,313.8 477.4,312.7 480.7,305.7 483.9,311.7 489.3,317 496.3,328.4 500,310.6 504.9,305.2 508.6,307.4 510.7,312.3 515.4,337.9 519.4,317.7 523.5,320.4 527.5,356.7 531.5,352.7 535.6,324.4 539.6,328.5 543,326.4 550.4,352.7 554.4,319.7 558.5,343.9 563.2,341.9 570.6,329.8 574.6,333.8 578.6,362.1 582,346.6 585.4,353.4 593.4,341.9 597.5,370.2 602.9,360.8 609.4,349 612.9,371.7 616.4,369.9 620.7,382.2 628.6,352.4 633,361.2 636.5,422.4 640.8,374.3 644.3,373.4 647.8,394.4 652.2,375.2 660.1,389.2 663.6,370.8 668,385.7 672.3,376.9 675.8,396.2 680.2,379.5 686.3,408.4 691.5,387.4 695,389.2 699.4,404.9 702.4,399.1 706.5,415.2 710.5,419.3 717.8,399.1 721.8,421.7 725.5,405.5 729.9,421.7 733.9,417.7 742,421.7 746,434.6 748.5,427.4 752.5,422.5 757.4,434.6 760.6,428.2 765.4,436.2 768.7,435.4 776.7,458 780.8,445.9 784,455.6 788,453.2 792.9,455.6 796.9,455.6 800.2,452.4 804.2,473.4 808.2,462.9 812.3,469.4 815.5,465.3"/>
<rect x="41" y="679" width="1" height="2" fill="#888"/>
<rect x="79" y="679" width="1" height="2" fill="#888"/>
<rect x="118" y="679" width="1" height="2" fill="#888"/>
<rect x="157" y="679" width="1" height="2" fill="#888"/>
<rect x="196" y="679" width="1" height="2" fill="#888"/>
<rect x="234" y="679" width="1" height="2" fill="#888"/>
<rect x="273" y="679" width="1" height="2" fill="#888"/>
<rect x="312" y="679" width="1" height="2" fill="#888"/>
<rect x="351" y="679" width="1" height="2" fill="#888"/>
<rect x="389" y="679" width="1" height="2" fill="#888"/>
<rect x="428" y="679" width="1" height="2" fill="#888"/>
<rect x="467" y="679" width="1" height="2" fill="#888"/>
<rect x="506" y="679" width="1" height="2" fill="#888"/>
<rect x="544" y="679" width="1" height="2" fill="#888"/>
<rect x="583" y="679" width="1" height="2" fill="#888"/>
<rect x="622" y="679" width="1" height="2" fill="#888"/>
<rect x="661" y="679" width="1" height="2" fill="#888"/>
<rect x="699" y="679" width="1" height="2" fill="#888"/>
<rect x="738" y="679" width="1" height="2" fill="#888"/>
<rect x="777" y="679" width="1" height="2" fill="#888"/>
<rect x="816" y="679" width="1" height="2" fill="#888"/>
<rect x="37" y="677" width="2" height="1" fill="#888"/>
<rect x="817" y="677" width="2" height="1" fill="#888"/>
<rect x="37" y="626" width="2" height="1" fill="#888"/>
<rect x="817" y="626" width="2" height="1" fill="#888"/>
<rect x="37" y="575" width="2" height="1" fill="#888"/>
<rect x="817" y="575" width="2" height="1" fill="#888"/>
<rect x="37" y="524" width="2" height="1" fill="#888"/>
<rect x="817" y="524" width="2" height="1" fill="#888"/>
<rect x="37" y="473" width="2" height="1" fill="#888"/>
<rect x="817" y="473" width="2" height="1" fill="#888"/>
<rect x="37" y="422" width="2" height="1" fill="#888"/>
<rect x="817" y="422" width="2" height="1" fill="#888"/>
<rect x="37" y="371" width="2" height="1" fill="#888"/>
<rect x="817" y="371" width="2" height="1" fill="#888"/>
<rect x="37" y="320" width="2" height="1" fill="#888"/>
<rect x="817" y="320" width="2" height="1" fill="#888"/>
<rect x="37" y="269" width="2" height="1" fill="#888"/>
<rect x="817" y="269" width="2" height="1" fill="#888"/>
<rect x="37" y="218" width="2" height="1" fill="#888"/>
<rect x="817" y="218" width="2" height="1" fill="#888"/>
<rect x="37" y="167" width="2" height="1" fill="#888"/>
<rect x="817" y="167" width="2" height="1" fill="#888"/>
</svg>
<div style="position:absolute;font-size:11px;color:#333;line-height:12px;white-space:pre;right:944px;top:161px">250</div>
<div style="position:absolute;font-size:11px;color:#333;line-height:12px;white-space:pre;left:821px;top:161px">50</div>
<div style="position:absolute;font-size:11px;color:#333;line-height:12px;white-space:pre;right:944px;top:263px">200</div>
<div style="position:absolute;font-size:11px;color:#333;line-height:12px;white-space:pre;left:821px;top:263px">40</div>
<div style="position:absolute;font-size:11px;color:#333;line-height:12px;white-space:pre;right:944px;top:365px">150</div>
<div style="position:absolute;font-size:11px;color:#333;line-height:12px;white-space:pre;left:821px;top:365px">30</div>
<div style="position:absolute;font-size:11px;color:#333;line-height:12px;white-space:pre;right:944px;top:467px">100</div>
<div style="position:absolute;font-size:11px;color:#333;line-height:12px;white-space:pre;left:821px;top:467px">20</div>
<div style="position:absolute;font-size:11px;color:#333;line-height:12px;white-space:pre;right:944px;top:569px">50</div>
<div style="position:absolute;font-size:11px;color:#333;line-height:12px;white-space:pre;left:821px;top:569px">10</div>
<div style="position:absolute;font-size:11px;color:#333;line-height:12px;white-space:pre;left:1.0px;width:80px;text-align:center;top:683px">0</div>
<div style="position:absolute;font-size:11px;color:#333;line-height:12px;white-space:pre;left:78.5px;width:80px;text-align:center;top:683px">2000</div>
<div style="position:absolute;font-size:11px;color:#333;line-height:12px;white-space:pre;left:156.0px;width:80px;text-align:center;top:683px">4000</div>
<div style="position:absolute;font-size:11px;color:#333;line-height:12px;white-space:pre;left:233.5px;width:80px;text-align:center;top:683px">6000</div>
<div style="position:absolute;font-size:11px;color:#333;line-height:12px;white-space:pre;left:311.0px;width:80px;text-align:center;top:683px">8000</div>
<div style="position:absolute;font-size:11px;color:#333;line-height:12px;white-space:pre;left:388.5px;width:80px;text-align:center;top:683px">10000</div>
<div style="position:absolute;font-size:11px;color:#333;line-height:12px;white-space:pre;left:466.0px;width:80px;text-align:center;top:683px">12000</div>
<div style="position:absolute;font-size:11px;color:#333;line-height:12px;white-space:pre;left:543.5px;width:80px;text-align:center;top:683px">14000</div>
<div style="position:absolute;font-size:11px;color:#333;line-height:12px;white-space:pre;left:621.0px;width:80px;text-align:center;top:683px">16000</div>
<div style="position:absolute;font-size:11px;color:#333;line-height:12px;white-space:pre;left:698.5px;width:80px;text-align:center;top:683px">18000</div>
<div style="position:absolute;font-size:11px;color:#333;line-height:12px;white-space:pre;left:794px;top:683px">20000gB</div>
<div style="position:absolute;font-size:11px;color:#333;line-height:12px;white-space:pre;left:41px;top:154px">MB/s</div>
<div style="position:absolute;font-size:11px;color:#333;line-height:12px;white-space:pre;left:802px;top:154px">ms</div>
<!-- right panel -->
<div class="btn" style="left:861px;top:146px;width:86px;height:28px;border-radius:4px;background:#fdfdfd"></div>
<div class="t" style="left:890px;top:153px">开始</div>
<div class="sep" style="top:187px"></div>
<div class="a" style="left:857px;top:198px;width:13px;height:13px;border-radius:50%;background:#0067c0"></div>
<div class="a" style="left:861px;top:202px;width:5px;height:5px;border-radius:50%;background:#fff"></div>
<div class="t" style="left:873px;top:197px">读取</div>
<div class="a" style="left:857px;top:219px;width:13px;height:13px;border-radius:50%;background:#f3f3f3;border:1px solid #8a8a8a"></div>
<div class="t" style="left:873px;top:218px">写入</div>
<div class="sep" style="top:239px"></div>
<div class="a" style="left:857px;top:251px;width:13px;height:13px;border-radius:3px;background:#f3f3f3;border:1px solid #8a8a8a"></div>
<div class="t" style="left:873px;top:250px">短行程</div>
<div class="a" style="left:857px;top:274px;width:72px;height:26px;background:#f7f7f7;border:1px solid #ececec"></div>
<div class="a" style="left:911px;top:274px;width:18px;height:26px;background:#f0f0f0;border:1px solid #d6d6d6"></div>
<svg class="a" style="left:916px;top:280px" width="8" height="14"><path d="M1 4 L4 1 L7 4Z M1 10 L4 13 L7 10Z" fill="#a0a0a0"/></svg>
<div class="t" style="left:860px;top:280px;color:#8a8a8a">40</div>
<div class="t" style="left:943px;top:281px">GB</div>
<div class="cb" style="top:315px"></div>
<svg class="a" style="left:857px;top:315px" width="13" height="13"><path d="M3 6.5 L5.5 9 L10 4" fill="none" stroke="#fff" stroke-width="1.2"/></svg>
<div class="t" style="left:873px;top:315px">传输速率</div>
<div class="sep" style="top:333px"></div>
<div class="t" style="left:857px;top:338px">最小</div>
<div class="lcd" style="top:356px;color:#18b8f0">100.0 MB/s</div>
<div class="t" style="left:857px;top:381px">最大</div>
<div class="lcd" style="top:399px;color:#18b8f0">220.6 MB/s</div>
<div class="t" style="left:857px;top:421px">平均</div>
<div class="lcd" style="top:439px;color:#18b8f0">174.9 MB/s</div>
<div class="sep" style="top:469px"></div>
<div class="cb" style="top:478px"></div>
<svg class="a" style="left:857px;top:478px" width="13" height="13"><path d="M3 6.5 L5.5 9 L10 4" fill="none" stroke="#fff" stroke-width="1.2"/></svg>
<div class="t" style="left:873px;top:478px">访问时间</div>
<div class="lcd" style="top:496px;color:#f0f000">15.0 ms</div>
<div class="cb" style="top:524px"></div>
<svg class="a" style="left:857px;top:524px" width="13" height="13"><path d="M3 6.5 L5.5 9 L10 4" fill="none" stroke="#fff" stroke-width="1.2"/></svg>
<div class="t" style="left:873px;top:523px">突发速率</div>
<div class="lcd" style="top:541px;color:#fff">152.5 MB/s</div>
<div class="t" style="left:857px;top:565px">CPU 使用率</div>
<div class="lcd" style="top:584px;color:#fff">3.2%</div>
<div class="t" style="left:857px;top:623px">通过次数</div>
<div class="a" style="left:857px;top:642px;width:90px;height:24px;background:#fff;border:1px solid #ececec"></div>
<div class="t" style="left:861px;top:647px">1</div>
<svg class="a" style="left:932px;top:646px" width="10" height="16"><path d="M2 5 L5 2 L8 5Z M2 11 L5 14 L8 11Z" fill="#333"/><path d="M0 8 H10" stroke="#ddd"/></svg>
<div class="a" style="left:857px;top:677px;width:62px;height:16px;background:#107c10"></div>
<div class="t" style="left:925px;top:679px">1/1</div>
<svg class="a" style="left:0;top:0" width="980" height="743">
<defs>
<filter id="sh" x="-20%" y="-20%" width="140%" height="140%">
<feMorphology in="SourceAlpha" operator="dilate" radius="0.7" result="dl"/>
<feGaussianBlur in="dl" stdDeviation="1.7" result="bl"/>
<feOffset in="bl" dx="0.7" dy="1" result="off"/>
<feFlood flood-color="#000" flood-opacity="0.8" result="fl"/>
<feComposite in="fl" in2="off" operator="in" result="shd"/>
<feComposite in="shd" in2="SourceAlpha" operator="out" result="shdo"/>
<feColorMatrix in="SourceGraphic" type="matrix" values="1 0 0 0 0  0 1 0 0 0  0 0 1 0 0  0 0 0 0.62 0" result="src"/>
<feMerge><feMergeNode in="shdo"/><feMergeNode in="src"/></feMerge>
</filter>
<filter id="sh2" x="-10%" y="-30%" width="120%" height="160%">
<feGaussianBlur in="SourceAlpha" stdDeviation="1.5" result="bl"/>
<feOffset in="bl" dx="1" dy="1.5" result="off"/>
<feFlood flood-color="#000" flood-opacity="0.95" result="fl"/>
<feComposite in="fl" in2="off" operator="in" result="shd"/>
<feMerge><feMergeNode in="shd"/><feMergeNode in="SourceGraphic"/></feMerge>
</filter>
</defs>
<g filter="url(#sh)">
<g fill="#fff">
<!-- c -->
<path d="M883 641.8 H901 V659 H895 V649 H889.5 V668 H883Z"/>
<!-- h (chip) -->
<path d="M907.7 630 H914 V641.8 H926 V668 H919.5 V649 H914 V668 H907.7Z"/>
<!-- i stem + circle -->
<rect x="931.5" y="640" width="6.5" height="74.5"/>
<path fill-rule="evenodd" d="M934.8 629 a6.5 6.5 0 1 0 0.01 0 Z M934.8 633.3 a2.2 2.2 0 1 1 -0.01 0 Z"/>
<!-- p + descender -->
<path fill-rule="evenodd" d="M944 641.8 H962.2 V669 H950 V715 H944Z M950 648.5 V662.4 H956.2 V648.5Z"/>
<!-- trace -->
<path d="M883 666 H889.5 V667 L896.5 674 H926.8 V680.7 H901.7 V714.5 H894.4 V678.5 L883 667.5Z"/>
<!-- h (hell) -->
<path d="M901.7 686 H913.4 V714.5 H907 V692.3 H901.7Z"/>
<!-- e -->
<path fill-rule="evenodd" d="M920 688.5 H938 V704 H926.5 V708 H938 V714.5 H920Z M929 692.7 a2.3 2.3 0 1 0 0.01 0Z"/>
<!-- l2 -->
<rect x="956" y="675.7" width="6.2" height="40"/>
<path fill-rule="evenodd" d="M959.2 713.9 a6.7 6.7 0 1 0 0.01 0 Z M959.2 718.3 a2.3 2.3 0 1 1 -0.01 0 Z"/>
</g>
</g>
<text x="754" y="712" font-family="Liberation Sans" font-size="16.6" fill="#fff" filter="url(#sh2)">www.chiphell.com</text>
</svg>

</body></html>
